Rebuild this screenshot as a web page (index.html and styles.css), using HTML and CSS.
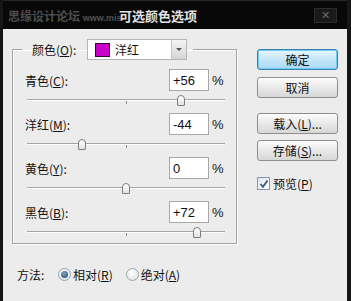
FILE: index.html
```html
<!DOCTYPE html>
<html lang="zh-CN">
<head>
  <meta charset="UTF-8">
  <title>可选颜色选项</title>
  <link rel="stylesheet" href="styles.css">
</head>
<body>

  <div class="dialog">
    <!-- Title Bar -->
    <div class="titlebar">
      <span class="watermark">思缘设计论坛 <small>www.mis</small></span>
      <span class="title">可选颜色选项</span>
      <span class="close">✕</span>
    </div>

    <div class="content">
      <div class="main">
        <fieldset class="group">
          <legend class="group-head">
            <span class="label">颜色(<u>O</u>):</span>
            <div class="select">
              <span class="swatch"></span>
              <span class="select-text">洋红</span>
              <span class="select-arrow"></span>
            </div>
          </legend>

          <!-- Cyan -->
          <div class="row">
            <div class="field">
              <span class="label">青色(<u>C</u>):</span>
              <input class="num" type="text" value="+56">
              <span class="pct">%</span>
            </div>
            <div class="slider"><span class="tick"></span><span class="thumb" style="left: 78%"></span></div>
          </div>

          <!-- Magenta -->
          <div class="row">
            <div class="field">
              <span class="label">洋红(<u>M</u>):</span>
              <input class="num" type="text" value="-44">
              <span class="pct">%</span>
            </div>
            <div class="slider"><span class="tick"></span><span class="thumb" style="left: 28%"></span></div>
          </div>

          <!-- Yellow -->
          <div class="row">
            <div class="field">
              <span class="label">黄色(<u>Y</u>):</span>
              <input class="num" type="text" value="0">
              <span class="pct">%</span>
            </div>
            <div class="slider"><span class="tick"></span><span class="thumb" style="left: 50%"></span></div>
          </div>

          <!-- Black -->
          <div class="row">
            <div class="field">
              <span class="label">黑色(<u>B</u>):</span>
              <input class="num" type="text" value="+72">
              <span class="pct">%</span>
            </div>
            <div class="slider"><span class="tick"></span><span class="thumb" style="left: 86%"></span></div>
          </div>
        </fieldset>

        <!-- Method -->
        <div class="method">
          <span class="method-label">方法:</span>
          <span class="radio checked"></span>
          <span class="radio-text">相对(<u>R</u>)</span>
          <span class="radio"></span>
          <span class="radio-text">绝对(<u>A</u>)</span>
        </div>
      </div>

      <!-- Buttons -->
      <div class="side">
        <div class="btn btn-default">确定</div>
        <div class="btn btn-cancel">取消</div>
        <div class="btn btn-load">载入(<u>L</u>)...</div>
        <div class="btn btn-save">存储(<u>S</u>)...</div>
        <div class="preview">
          <span class="checkbox">
            <svg width="10" height="10" viewBox="0 0 10 10"><polyline points="1.5,5 4,7.8 8.5,1.5" fill="none" stroke="#3d5488" stroke-width="1.8"/></svg>
          </span>
          <span>预览(<u>P</u>)</span>
        </div>
      </div>
    </div>
  </div>

</body>
</html>
```

FILE: styles.css
```css
/* Basic Reset */
* {
  margin: 0;
  padding: 0;
  box-sizing: border-box;
}

body {
  background: #000;
  font-family: "Noto Sans CJK SC", "Liberation Sans", sans-serif;
  font-size: 12px;
  color: #111;
}

u {
  text-decoration: underline;
  text-underline-offset: 1px;
}

/* Dialog Frame */
.dialog {
  width: 351px;
  height: 301px;
  background: #0b0b0b;
  border-left: 3px solid #161616;
  border-right: 4px solid #161616;
  display: flex;
  flex-direction: column;
}

/* Title Bar */
.titlebar {
  height: 29px;
  display: flex;
  align-items: center;
  background: #080808;
  border-top: 1px solid #262626;
}

.watermark {
  width: 116px;
  padding-left: 5px;
  white-space: nowrap;
  color: #4d4d4d;
  font-weight: bold;
  font-size: 12px;
}

.watermark small {
  font-family: "Liberation Sans", sans-serif;
  font-size: 9px;
  color: #505050;
}

.title {
  color: #e2e2e2;
  font-weight: bold;
  font-size: 13px;
}

.close {
  margin-left: auto;
  margin-right: 10px;
  width: 23px;
  height: 15px;
  display: flex;
  justify-content: center;
  align-items: center;
  background: #1a1a1a;
  border: 1px solid #2c2c2c;
  color: #6a6a6a;
  font-size: 11px;
  font-family: "DejaVu Sans", sans-serif;
}

/* Content */
.content {
  flex: 1;
  background: #ececec;
  display: flex;
}

.main {
  padding: 10px 0 0 9px;
}

/* Group box */
.group {
  width: 225px;
  border: 1px solid #a3a3a3;
  box-shadow: inset 1px 1px 0 #fff, 1px 1px 0 #fff;
  padding: 0 9px 0 12px;
}

.group-head {
  margin-left: -3px;
  padding: 0 6px 0 10px;
  display: flex;
  align-items: center;
}

.group-head .label {
  width: 55px;
}

/* Dropdown */
.select {
  width: 100px;
  height: 21px;
  display: flex;
  align-items: center;
  background: #fff;
  border: 1px solid #b5b5b5;
}

.swatch {
  width: 15px;
  height: 14px;
  margin: 0 5px 0 7px;
  background: #c800c8;
  border: 1px solid #3a003a;
}

.select-text {
  flex: 1;
  font-size: 12px;
}

.select-arrow {
  width: 15px;
  height: 19px;
  background: linear-gradient(#f4f4f4, #d6d6d6);
  border-left: 1px solid #c4c4c4;
  display: flex;
  justify-content: center;
  align-items: center;
}

.select-arrow::before {
  content: '';
  border-left: 3px solid transparent;
  border-right: 3px solid transparent;
  border-top: 3px solid #555;
}

/* Value rows */
.row {
  margin-top: 9px;
}

.row + .row {
  margin-top: 2px;
}

.field {
  height: 22px;
  display: flex;
  align-items: center;
}

.field .label {
  flex: 1;
}

.num {
  width: 40px;
  height: 22px;
  border: 1px solid #a8a8a8;
  background: #fff;
  padding-left: 3px;
  font-family: "Liberation Sans", sans-serif;
  font-size: 13px;
  color: #111;
  outline: none;
}

.pct {
  width: 15px;
  margin-left: 3px;
  font-family: "Liberation Sans", sans-serif;
  font-size: 13px;
}

/* Slider */
.slider {
  position: relative;
  height: 20px;
  margin: 0 2px;
}

.slider::before {
  content: '';
  position: absolute;
  left: 0;
  right: 0;
  top: 8px;
  border-top: 1px solid #a4a4a4;
  border-bottom: 1px solid #fff;
}

.tick {
  position: absolute;
  left: 50%;
  top: 10px;
  width: 1px;
  height: 3px;
  background: #8c8c8c;
}

.thumb {
  position: absolute;
  top: 4px;
  width: 8px;
  height: 11px;
  margin-left: -4px;
  background: linear-gradient(#fff, #e2e2e2);
  border: 1px solid #7d7d7d;
  border-radius: 4px 4px 1px 1px;
}

/* Method */
.method {
  margin-top: 20px;
  height: 20px;
  padding-left: 5px;
  display: flex;
  align-items: center;
}

.method-label {
  width: 41px;
}

.radio {
  width: 13px;
  height: 13px;
  border-radius: 50%;
  border: 1px solid #9aa4ad;
  background: radial-gradient(circle at 40% 35%, #fff, #d9dde0);
  display: flex;
  justify-content: center;
  align-items: center;
}

.radio.checked::before {
  content: '';
  width: 7px;
  height: 7px;
  border-radius: 50%;
  background: radial-gradient(circle at 40% 35%, #7fa3c4, #22476b);
}

.radio-text {
  margin: 0 13px 0 2px;
}

/* Right side buttons */
.side {
  margin-left: 20px;
  padding-top: 20px;
  width: 81px;
  display: flex;
  flex-direction: column;
}

.btn {
  height: 21px;
  display: flex;
  justify-content: center;
  align-items: center;
  background: linear-gradient(#fdfdfd, #e9e9e9 50%, #d7d7d7);
  border: 1px solid #8e8e8e;
  border-radius: 3px;
  font-size: 12px;
}

.btn-default {
  background: linear-gradient(#e8f6fd, #c4e7f9 50%, #a7d9f3);
  border: 1px solid #3c7fb1;
  box-shadow: inset 0 0 0 1px #6fcdf5;
}

.btn-cancel {
  margin-top: 7px;
}

.btn-load {
  margin-top: 15px;
}

.btn-save {
  margin-top: 6px;
}

.preview {
  margin-top: 14px;
  display: flex;
  align-items: center;
}

.checkbox {
  width: 13px;
  height: 13px;
  margin-right: 3px;
  border: 1px solid #8796ad;
  background: linear-gradient(135deg, #dfe3ea, #fff);
  display: flex;
  justify-content: center;
  align-items: center;
}
```
